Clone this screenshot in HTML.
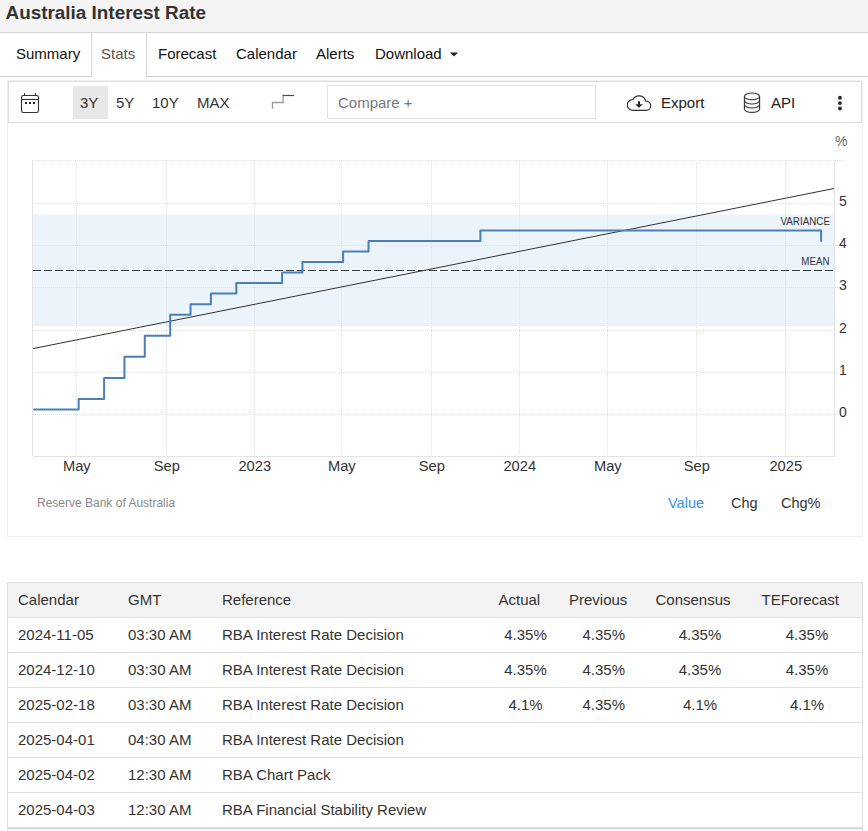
<!DOCTYPE html>
<html><head><meta charset="utf-8">
<style>
*{box-sizing:border-box;margin:0;padding:0}
html,body{width:868px;height:831px;overflow:hidden;background:#fff;font-family:"Liberation Sans",sans-serif;color:#333}
.a{position:absolute;white-space:nowrap}
.t{position:absolute;white-space:nowrap;line-height:1}
</style></head><body>
<!-- header -->
<div class="a" style="left:0;top:0;width:868px;height:33px;background:#f4f4f4;border-bottom:1px solid #d4d4d4"></div>
<div class="t" style="left:5.5px;top:4px;font-size:18.9px;font-weight:bold;color:#333">Australia Interest Rate</div>

<!-- tabs -->
<div class="a" style="left:0;top:76px;width:92px;height:1px;background:#cfcfcf"></div>
<div class="a" style="left:146px;top:76px;width:722px;height:1px;background:#cfcfcf"></div>
<div class="a" style="left:91px;top:33px;width:1px;height:44px;background:#d6d6d6"></div>
<div class="a" style="left:146px;top:33px;width:1px;height:44px;background:#d6d6d6"></div>
<div class="t" style="left:16px;top:46px;font-size:15px;color:#111">Summary</div>
<div class="t" style="left:101px;top:46px;font-size:15px;color:#555">Stats</div>
<div class="t" style="left:158px;top:46px;font-size:15px;color:#111">Forecast</div>
<div class="t" style="left:236px;top:46px;font-size:15px;color:#111">Calendar</div>
<div class="t" style="left:316px;top:46px;font-size:15px;color:#111">Alerts</div>
<div class="t" style="left:375px;top:46px;font-size:15px;color:#111">Download</div>
<svg class="a" style="left:450px;top:51.5px" width="8" height="5"><path d="M0 0.5H8L4 4.5Z" fill="#222"/></svg>

<!-- chart container -->
<div class="a" style="left:7px;top:80px;width:856px;height:457px;border:1px solid #f0f0f0"></div>
<!-- toolbar -->
<div class="a" style="left:8px;top:81px;width:854px;height:42px;border:1px solid #dcdfe2"></div>
<svg class="a" style="left:19px;top:91px" width="24" height="24" viewBox="0 0 24 24">
  <rect x="2.5" y="4.5" width="17" height="17" rx="1.8" fill="none" stroke="#333" stroke-width="1.1"/>
  <line x1="2.5" y1="8.5" x2="19.5" y2="8.5" stroke="#333" stroke-width="1.1"/>
  <line x1="5.6" y1="2" x2="5.6" y2="4.5" stroke="#333" stroke-width="1.1"/>
  <line x1="16.5" y1="2" x2="16.5" y2="4.5" stroke="#333" stroke-width="1.1"/>
  <rect x="6" y="11" width="2" height="2" fill="#222"/>
  <rect x="10" y="11" width="2" height="2" fill="#222"/>
  <rect x="14" y="11" width="2" height="2" fill="#222"/>
</svg>
<div class="a" style="left:73px;top:86px;width:35px;height:33px;background:#e8e8e8"></div>
<div class="t" style="left:80px;top:95px;font-size:15px;color:#333">3Y</div>
<div class="t" style="left:116px;top:95px;font-size:15px;color:#333">5Y</div>
<div class="t" style="left:152px;top:95px;font-size:15px;color:#333">10Y</div>
<div class="t" style="left:197px;top:95px;font-size:15px;color:#333">MAX</div>
<svg class="a" style="left:270px;top:93px" width="26" height="18"><path d="M2.5 16V9.5H13.2V2.5" fill="none" stroke="#9a9a9a" stroke-width="1.3"/><path d="M12.6 2.5H24" fill="none" stroke="#4a4a4a" stroke-width="1.2"/></svg>
<div class="a" style="left:327px;top:85px;width:269px;height:34px;border:1px solid #e4e2da"></div>
<div class="t" style="left:338px;top:95px;font-size:15px;color:#777">Compare +</div>
<svg class="a" style="left:627px;top:95px" width="25" height="17" viewBox="0 0 25 17">
  <path d="M5.5 15.4A5.4 5.4 0 0 1 5.8 4.6A7 7 0 0 1 18.8 6.1A4.6 4.6 0 0 1 19.3 15.4Z" fill="none" stroke="#333" stroke-width="1.2"/>
  <rect x="11" y="6.3" width="2" height="3.2" fill="#222"/>
  <path d="M8.3 9.2H15.7L12 12.7Z" fill="#222"/>
</svg>
<div class="t" style="left:661px;top:95px;font-size:15px;color:#222">Export</div>
<svg class="a" style="left:742px;top:91px" width="20" height="24" viewBox="0 0 20 24">
  <ellipse cx="10" cy="5.4" rx="7.6" ry="3.4" fill="none" stroke="#333" stroke-width="1.1"/>
  <path d="M2.4 5.4V18M17.6 5.4V18" fill="none" stroke="#333" stroke-width="1.1"/>
  <path d="M2.4 9.6A7.6 3.4 0 0 0 17.6 9.6M2.4 13.6A7.6 3.4 0 0 0 17.6 13.6M2.4 18A7.6 3.4 0 0 0 17.6 18" fill="none" stroke="#333" stroke-width="1.1"/>
</svg>
<div class="t" style="left:771px;top:95px;font-size:15px;color:#222">API</div>
<svg class="a" style="left:836px;top:95px" width="9" height="17"><circle cx="3.95" cy="2.8" r="1.95" fill="#2a2a2a"/><circle cx="3.95" cy="8.1" r="1.95" fill="#2a2a2a"/><circle cx="3.95" cy="13.5" r="1.95" fill="#2a2a2a"/></svg>

<!-- chart -->
<svg class="a" style="left:0;top:0" width="868" height="560" viewBox="0 0 868 560">
  <rect x="33" y="214.5" width="801" height="111.5" fill="#ecf4fb"/>
  <g stroke="#e0e0e0" stroke-width="1" stroke-dasharray="1 1" fill="none">
    <path d="M33 160.5H844M33 203.5H838M33 245.5H838M33 287.5H838M33 330.5H838M33 372.5H838M33 414.5H838"/>
    <path d="M76.5 161V455M166.5 161V455M254.5 161V455M341.5 161V455M431.5 161V455M519.5 161V455M607.5 161V455M696.5 161V455M785.5 161V455"/>
  </g>
  <path d="M32.5 160V456M834.5 160V456M33 456.5H835" stroke="#e3e3e3" stroke-width="1" fill="none"/>
  <path d="M33 270.5H834" stroke="#fff" stroke-width="3" fill="none" opacity="0.5"/>
  <path d="M33 270.5H834" stroke="#30383e" stroke-width="1" stroke-dasharray="8 3" fill="none"/>
  <path d="M33 348.6L834 188.5" stroke="#333" stroke-width="1" fill="none"/>
  <path d="M34 409.6 H78.68 V398.95 H104.10 V377.88 H124.44 V356.81 H144.78 V335.74 H170.21 V314.67 H190.55 V304.14 H210.89 V293.60 H236.31 V283.07 H282.08 V272.53 H302.42 V262.00 H343.10 V251.46 H368.52 V240.93 H480.40 V230.39 H821.09 V240.93" stroke="#4a7ebb" stroke-width="2" fill="none" stroke-linejoin="round" stroke-linecap="round"/>
</svg>
<div class="t" style="left:730px;top:216px;font-size:11px;color:#333;width:100px;text-align:right;transform:scaleX(0.895);transform-origin:100% 50%">VARIANCE</div>
<div class="t" style="left:730px;top:256px;font-size:11px;color:#333;width:99.5px;text-align:right;transform:scaleX(0.885);transform-origin:100% 50%">MEAN</div>
<div class="t" style="left:835px;top:134px;font-size:14px;color:#666">%</div>
<div class="t" style="left:839px;top:194px;font-size:14px;color:#333">5</div>
<div class="t" style="left:839px;top:236px;font-size:14px;color:#333">4</div>
<div class="t" style="left:839px;top:278px;font-size:14px;color:#333">3</div>
<div class="t" style="left:839px;top:321px;font-size:14px;color:#333">2</div>
<div class="t" style="left:839px;top:363px;font-size:14px;color:#333">1</div>
<div class="t" style="left:839px;top:405px;font-size:14px;color:#333">0</div>
<div class="t" style="left:46.8px;top:459px;width:60px;text-align:center;font-size:14.7px;color:#333">May</div>
<div class="t" style="left:136.8px;top:459px;width:60px;text-align:center;font-size:14.7px;color:#333">Sep</div>
<div class="t" style="left:224.8px;top:459px;width:60px;text-align:center;font-size:14.7px;color:#333">2023</div>
<div class="t" style="left:311.8px;top:459px;width:60px;text-align:center;font-size:14.7px;color:#333">May</div>
<div class="t" style="left:401.8px;top:459px;width:60px;text-align:center;font-size:14.7px;color:#333">Sep</div>
<div class="t" style="left:489.8px;top:459px;width:60px;text-align:center;font-size:14.7px;color:#333">2024</div>
<div class="t" style="left:577.8px;top:459px;width:60px;text-align:center;font-size:14.7px;color:#333">May</div>
<div class="t" style="left:666.8px;top:459px;width:60px;text-align:center;font-size:14.7px;color:#333">Sep</div>
<div class="t" style="left:755.8px;top:459px;width:60px;text-align:center;font-size:14.7px;color:#333">2025</div>
<div class="t" style="left:37px;top:497px;font-size:12px;color:#888">Reserve Bank of Australia</div>
<div class="t" style="left:668px;top:496px;font-size:14.5px;color:#3394f0">Value</div>
<div class="t" style="left:731px;top:496px;font-size:14.5px;color:#333">Chg</div>
<div class="t" style="left:781px;top:496px;font-size:14.5px;color:#333">Chg%</div>

<!-- table -->
<!--TBL-->
<div class="a" style="left:7px;top:582px;width:856px;height:260px;border:1px solid #dadde0;border-bottom:0"></div>
<div class="a" style="left:8px;top:828px;width:854px;height:1px;background:#d2d4d4"></div>
<div class="a" style="left:8px;top:829px;width:854px;height:5px;background:#f9f9f9"></div>
<div class="a" style="left:8px;top:583px;width:854px;height:34px;background:#f3f3f3"></div>
<div class="a" style="left:8px;top:617px;width:854px;height:1px;background:#dee2e6"></div>
<div class="a" style="left:8px;top:652px;width:854px;height:1px;background:#dee2e6"></div>
<div class="a" style="left:8px;top:687px;width:854px;height:1px;background:#dee2e6"></div>
<div class="a" style="left:8px;top:722px;width:854px;height:1px;background:#dee2e6"></div>
<div class="a" style="left:8px;top:757px;width:854px;height:1px;background:#dee2e6"></div>
<div class="a" style="left:8px;top:792px;width:854px;height:1px;background:#dee2e6"></div>
<div class="a" style="left:8px;top:827px;width:854px;height:1px;background:#dee2e6"></div>
<div class="t" style="left:18px;top:592px;font-size:15px">Calendar</div>
<div class="t" style="left:128px;top:592px;font-size:15px">GMT</div>
<div class="t" style="left:222px;top:592px;font-size:15px">Reference</div>
<div class="t" style="left:498.5px;top:592px;font-size:15px">Actual</div>
<div class="t" style="left:569px;top:592px;font-size:15px">Previous</div>
<div class="t" style="left:655.5px;top:592px;font-size:15px">Consensus</div>
<div class="t" style="left:761.5px;top:592px;font-size:15px">TEForecast</div>
<div class="t" style="left:18px;top:627px;font-size:15px">2024-11-05</div>
<div class="t" style="left:128px;top:627px;font-size:15px">03:30 AM</div>
<div class="t" style="left:222px;top:627px;font-size:15px">RBA Interest Rate Decision</div>
<div class="t" style="left:485.5px;top:627px;width:80px;text-align:center;font-size:15px">4.35%</div>
<div class="t" style="left:563.8px;top:627px;width:80px;text-align:center;font-size:15px">4.35%</div>
<div class="t" style="left:660.0px;top:627px;width:80px;text-align:center;font-size:15px">4.35%</div>
<div class="t" style="left:767.0px;top:627px;width:80px;text-align:center;font-size:15px">4.35%</div>
<div class="t" style="left:18px;top:662px;font-size:15px">2024-12-10</div>
<div class="t" style="left:128px;top:662px;font-size:15px">03:30 AM</div>
<div class="t" style="left:222px;top:662px;font-size:15px">RBA Interest Rate Decision</div>
<div class="t" style="left:485.5px;top:662px;width:80px;text-align:center;font-size:15px">4.35%</div>
<div class="t" style="left:563.8px;top:662px;width:80px;text-align:center;font-size:15px">4.35%</div>
<div class="t" style="left:660.0px;top:662px;width:80px;text-align:center;font-size:15px">4.35%</div>
<div class="t" style="left:767.0px;top:662px;width:80px;text-align:center;font-size:15px">4.35%</div>
<div class="t" style="left:18px;top:697px;font-size:15px">2025-02-18</div>
<div class="t" style="left:128px;top:697px;font-size:15px">03:30 AM</div>
<div class="t" style="left:222px;top:697px;font-size:15px">RBA Interest Rate Decision</div>
<div class="t" style="left:485.5px;top:697px;width:80px;text-align:center;font-size:15px">4.1%</div>
<div class="t" style="left:563.8px;top:697px;width:80px;text-align:center;font-size:15px">4.35%</div>
<div class="t" style="left:660.0px;top:697px;width:80px;text-align:center;font-size:15px">4.1%</div>
<div class="t" style="left:767.0px;top:697px;width:80px;text-align:center;font-size:15px">4.1%</div>
<div class="t" style="left:18px;top:732px;font-size:15px">2025-04-01</div>
<div class="t" style="left:128px;top:732px;font-size:15px">04:30 AM</div>
<div class="t" style="left:222px;top:732px;font-size:15px">RBA Interest Rate Decision</div>
<div class="t" style="left:18px;top:767px;font-size:15px">2025-04-02</div>
<div class="t" style="left:128px;top:767px;font-size:15px">12:30 AM</div>
<div class="t" style="left:222px;top:767px;font-size:15px">RBA Chart Pack</div>
<div class="t" style="left:18px;top:802px;font-size:15px">2025-04-03</div>
<div class="t" style="left:128px;top:802px;font-size:15px">12:30 AM</div>
<div class="t" style="left:222px;top:802px;font-size:15px">RBA Financial Stability Review</div>
<!--/TBL-->
</body></html>
